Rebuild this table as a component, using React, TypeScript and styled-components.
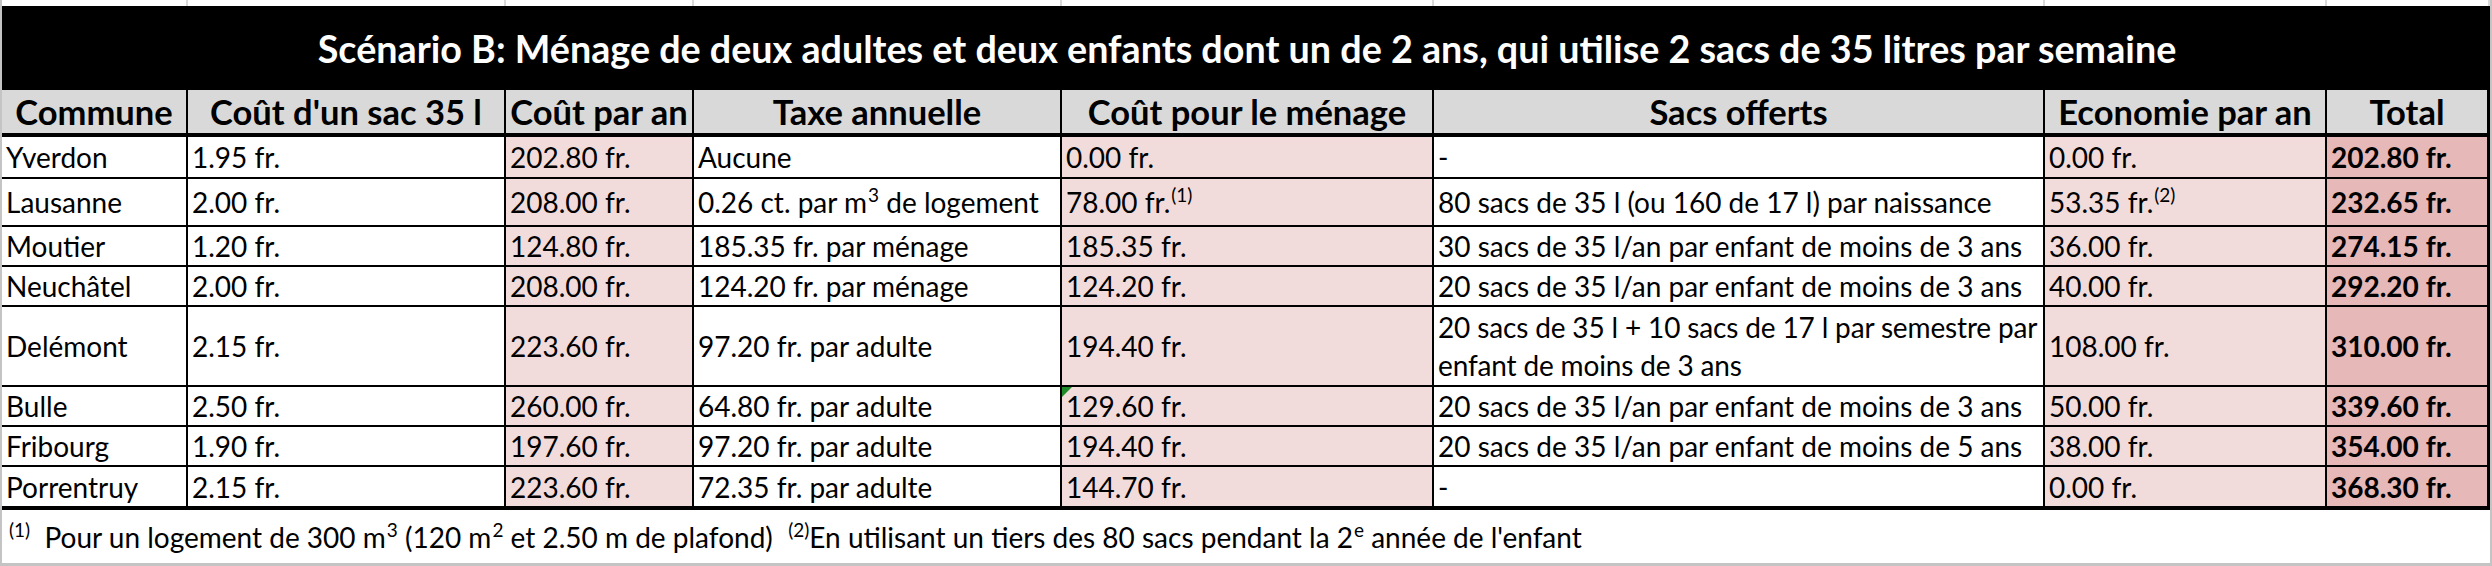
import React from 'react'
import styled, { createGlobalStyle, css } from 'styled-components'

const COLUMNS = [186, 318, 188, 368, 372, 611, 282, 163]
const template = COLUMNS.map((w) => `${w}px`).join(' ')

type Tone = 'plain' | 'pink' | 'rose' | 'head'

const tones: Record<Tone, string> = {
  plain: '#ffffff',
  pink: '#f2dcdb',
  rose: '#e6b8b7',
  head: '#d9d9d9',
}

const columnTones: Tone[] = ['plain', 'plain', 'pink', 'plain', 'pink', 'plain', 'pink', 'rose']

const GlobalStyle = createGlobalStyle`
  html, body {
    margin: 0;
    padding: 0;
    background: #ffffff;
  }
  body {
    font-family: Lato, 'Open Sans', sans-serif;
    color: #000000;
  }
`

const Sheet = styled.div`
  width: 2492px;
  height: 566px;
  box-sizing: border-box;
  border-left: 2px solid #c4c4c4;
  border-right: 2px solid #c4c4c4;
  border-bottom: 3px solid #c4c4c4;
  overflow: hidden;
`

const GridStrip = styled.div`
  display: grid;
  grid-template-columns: ${template};
  height: 6px;
`

const GridLine = styled.div`
  border-right: 2px solid #dadada;
  box-sizing: border-box;
`

const Title = styled.div`
  height: 84px;
  margin-right: -2px;
  background: #000000;
  color: #ffffff;
  display: flex;
  align-items: center;
  justify-content: center;
  font-size: 37.7px;
  font-weight: 700;
  white-space: nowrap;
`

const Row = styled.div<{ $height: number }>`
  display: grid;
  grid-template-columns: ${template};
  grid-template-rows: ${(p) => p.$height}px;
  height: ${(p) => p.$height}px;
`

const Cell = styled.div<{
  $tone: Tone
  $bottom: number
  $last?: boolean
  $bold?: boolean
  $header?: boolean
}>(
  ({ $tone, $bottom, $last, $bold, $header }) => css`
    position: relative;
    box-sizing: border-box;
    min-height: 0;
    display: flex;
    align-items: center;
    justify-content: ${$header ? 'center' : 'flex-start'};
    padding: 0 4px;
    background: ${tones[$tone]};
    border-bottom: ${$bottom}px solid #000000;
    border-right: ${$last ? 3 : 2}px solid #000000;
    font-size: ${$header ? 34.5 : 28}px;
    font-weight: ${$bold || $header ? 700 : 400};
    line-height: 34px;
    white-space: nowrap;
  `,
)

const Lines = styled.div`
  line-height: 38px;
  letter-spacing: -0.15px;
`

const Sup = styled.sup`
  font-size: 19px;
  line-height: 0;
  vertical-align: 11px;
  margin-left: 1px;
`

const ErrorFlag = styled.span`
  position: absolute;
  top: 0;
  left: 0;
  width: 0;
  height: 0;
  border-top: 10px solid #1f8a2a;
  border-right: 10px solid transparent;
`

const Footer = styled.div`
  height: 53px;
  display: flex;
  align-items: center;
  padding-left: 6px;
`

const FooterText = styled.span`
  font-size: 28px;
  line-height: 34px;
  white-space: pre;
`

type Entry = {
  height: number
  cells: React.ReactNode[]
  flag?: number
}

const headers = [
  'Commune',
  "Coût d'un sac 35 l",
  'Coût par an',
  'Taxe annuelle',
  'Coût pour le ménage',
  'Sacs offerts',
  'Economie par an',
  'Total',
]

const entries: Entry[] = [
  {
    height: 42,
    cells: ['Yverdon', '1.95 fr.', '202.80 fr.', 'Aucune', '0.00 fr.', '-', '0.00 fr.', '202.80 fr.'],
  },
  {
    height: 48,
    cells: [
      'Lausanne',
      '2.00 fr.',
      '208.00 fr.',
      <span>
        {'0.26 ct. par m'}
        <Sup>3</Sup>
        {' de logement'}
      </span>,
      <span>
        {'78.00 fr.'}
        <Sup>(1)</Sup>
      </span>,
      '80 sacs de 35 l (ou 160 de 17 l) par naissance',
      <span>
        {'53.35 fr.'}
        <Sup>(2)</Sup>
      </span>,
      '232.65 fr.',
    ],
  },
  {
    height: 40,
    cells: [
      'Moutier',
      '1.20 fr.',
      '124.80 fr.',
      '185.35 fr. par ménage',
      '185.35 fr.',
      '30 sacs de 35 l/an par enfant de moins de 3 ans',
      '36.00 fr.',
      '274.15 fr.',
    ],
  },
  {
    height: 40,
    cells: [
      'Neuchâtel',
      '2.00 fr.',
      '208.00 fr.',
      '124.20 fr. par ménage',
      '124.20 fr.',
      '20 sacs de 35 l/an par enfant de moins de 3 ans',
      '40.00 fr.',
      '292.20 fr.',
    ],
  },
  {
    height: 80,
    cells: [
      'Delémont',
      '2.15 fr.',
      '223.60 fr.',
      '97.20 fr. par adulte',
      '194.40 fr.',
      <Lines>
        20 sacs de 35 l + 10 sacs de 17 l par semestre par
        <br />
        enfant de moins de 3 ans
      </Lines>,
      '108.00 fr.',
      '310.00 fr.',
    ],
  },
  {
    height: 40,
    flag: 4,
    cells: [
      'Bulle',
      '2.50 fr.',
      '260.00 fr.',
      '64.80 fr. par adulte',
      '129.60 fr.',
      '20 sacs de 35 l/an par enfant de moins de 3 ans',
      '50.00 fr.',
      '339.60 fr.',
    ],
  },
  {
    height: 40,
    cells: [
      'Fribourg',
      '1.90 fr.',
      '197.60 fr.',
      '97.20 fr. par adulte',
      '194.40 fr.',
      '20 sacs de 35 l/an par enfant de moins de 5 ans',
      '38.00 fr.',
      '354.00 fr.',
    ],
  },
  {
    height: 43,
    cells: [
      'Porrentruy',
      '2.15 fr.',
      '223.60 fr.',
      '72.35 fr. par adulte',
      '144.70 fr.',
      '-',
      '0.00 fr.',
      '368.30 fr.',
    ],
  },
]

export default function App() {
  const lastRow = entries.length - 1

  return (
    <>
      <GlobalStyle />
      <Sheet>
        <GridStrip>
          {COLUMNS.map((w) => (
            <GridLine key={w} />
          ))}
        </GridStrip>
        <Title>
          Scénario B: Ménage de deux adultes et deux enfants dont un de 2 ans, qui utilise 2 sacs de 35 litres par semaine
        </Title>
        <Row $height={47}>
          {headers.map((label, i) => (
            <Cell key={label} $tone="head" $bottom={4} $last={i === 7} $header>
              {label}
            </Cell>
          ))}
        </Row>
        {entries.map((entry, r) => (
          <Row key={r} $height={entry.height}>
            {entry.cells.map((content, i) => (
              <Cell
                key={i}
                $tone={columnTones[i]}
                $bottom={r === lastRow ? 4 : 2}
                $last={i === 7}
                $bold={i === 7}
              >
                {entry.flag === i && <ErrorFlag />}
                {content}
              </Cell>
            ))}
          </Row>
        ))}
        <Footer>
          <FooterText>
            <Sup>(1)</Sup>
            {'  Pour un logement de 300 m'}
            <Sup>3</Sup>
            {' (120 m'}
            <Sup>2</Sup>
            {' et 2.50 m de plafond)  '}
            <Sup>(2)</Sup>
            {'En utilisant un tiers des 80 sacs pendant la 2'}
            <Sup>e</Sup>
            {" année de l'enfant"}
          </FooterText>
        </Footer>
      </Sheet>
    </>
  )
}
